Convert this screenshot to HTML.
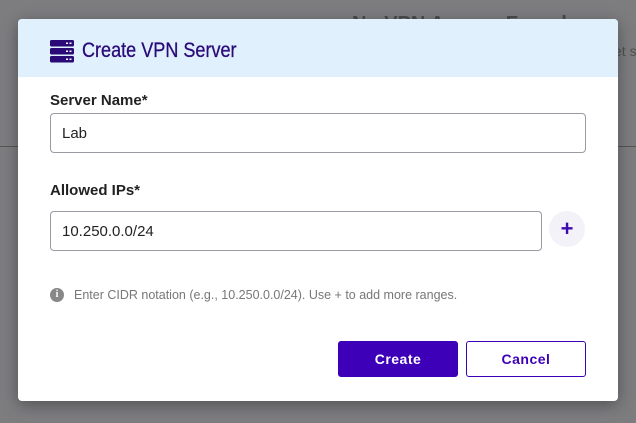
<!DOCTYPE html>
<html><head><style>
body{margin:0;width:636px;height:423px;overflow:hidden;background:#7d7d80;font-family:"Liberation Sans",sans-serif;position:relative}
.bg1{position:absolute;left:352px;top:13px;font-size:20px;font-weight:bold;color:#2a2a2a;opacity:.6;white-space:nowrap}
.bg2{position:absolute;left:614px;top:43px;font-size:14px;color:#333;opacity:.6;white-space:nowrap}
.line{position:absolute;left:0;right:0;top:146px;height:1px;background:#555}
.dlg{position:absolute;left:18px;top:19px;width:600px;height:382px;background:#fff;border-radius:4px;overflow:hidden;box-shadow:0 4px 16px rgba(0,0,0,.35)}
.hd{height:58px;background:#e0f0fd;position:relative}
.hd svg{position:absolute;left:32px;top:21px}
.hd span{position:absolute;left:64px;top:20px;font-size:21px;color:#2a0a78;transform:scaleX(.86);transform-origin:left;-webkit-text-stroke:.3px #2a0a78}
.lbl{position:absolute;left:32px;font-size:15px;font-weight:bold;color:#222}
.in{position:absolute;left:32px;height:40px;border:1px solid #9a9aa2;border-radius:4px;box-sizing:border-box;font-size:15px;color:#222;padding:12px 11px;line-height:16px}
.plus{position:absolute;left:531px;top:192px;width:36px;height:36px;border-radius:50%;background:#f3f2f8;color:#3d0cb0;font-size:22px;font-weight:bold;text-align:center;line-height:35px}
.info{position:absolute;left:32px;top:269px;font-size:12.5px;color:#777;display:flex;align-items:center}
.info i{display:inline-block;width:14px;height:14px;border-radius:50%;background:#888;color:#fff;font-style:normal;font-weight:bold;font-size:10px;text-align:center;line-height:14px;margin-right:10px;font-family:"Liberation Serif",serif}
.btn{position:absolute;top:322px;width:120px;height:36px;box-sizing:border-box;border-radius:3px;font-size:14px;font-weight:bold;text-align:center;line-height:34px;letter-spacing:.5px}
</style></head><body>
<div class="bg1">No VPN Access Found</div>
<div class="bg2">et s</div>
<div class="line"></div>
<div class="dlg">
<div class="hd">
<svg width="24" height="23" viewBox="0 0 24 23"><g fill="#2a0a78"><rect x="0" y="0" width="24" height="6.5" rx="1.5"/><rect x="0" y="8" width="24" height="6.5" rx="1.5"/><rect x="0" y="16" width="24" height="6.5" rx="1.5"/></g><g fill="#fff"><rect x="16" y="2.5" width="2" height="1.5"/><rect x="19.5" y="2.5" width="2" height="1.5"/><rect x="16" y="10.5" width="2" height="1.5"/><rect x="19.5" y="10.5" width="2" height="1.5"/><rect x="16" y="18.5" width="2" height="1.5"/><rect x="19.5" y="18.5" width="2" height="1.5"/></g></svg>
<span>Create VPN Server</span></div>
<div class="lbl" style="top:73px">Server Name*</div>
<div class="in" style="top:94px;width:536px">Lab</div>
<div class="lbl" style="top:163px">Allowed IPs*</div>
<div class="in" style="top:192px;width:492px">10.250.0.0/24</div>
<div class="plus">+</div>
<div class="info"><i>i</i>Enter CIDR notation (e.g., 10.250.0.0/24). Use + to add more ranges.</div>
<div class="btn" style="left:320px;background:#3d00b8;color:#fff;border:1px solid #3d00b8">Create</div>
<div class="btn" style="left:448px;background:#fff;color:#3d00b8;border:1px solid #3d00b8">Cancel</div>
</div>
</body></html>
